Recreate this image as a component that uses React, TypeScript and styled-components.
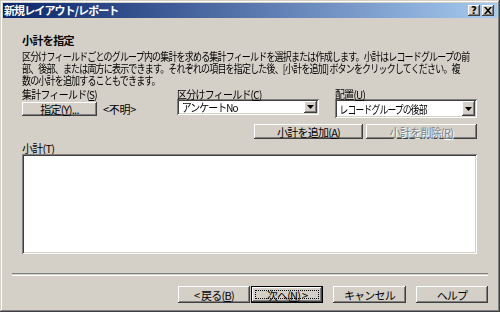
import * as React from 'react';
import styled, { createGlobalStyle, css } from 'styled-components';

const GlobalStyle = createGlobalStyle`
  html, body {
    margin: 0;
    padding: 0;
    background: #d4d0c8;
  }
  body {
    width: 500px;
    height: 312px;
    overflow: hidden;
    font-family: "Noto Sans CJK JP", "Liberation Sans", sans-serif;
    font-size: 11px;
    letter-spacing: -0.75px;
    color: #000;
  }
`;

const raised = css`
  box-shadow: inset -1px -1px #404040, inset 1px 1px #fff, inset -2px -2px #808080,
    inset 2px 2px #d4d0c8;
`;

const sunken = css`
  box-shadow: inset 1px 1px #808080, inset -1px -1px #fff, inset 2px 2px #404040,
    inset -2px -2px #d4d0c8;
`;

// the original UI font has narrow kana, so long runs get squeezed horizontally
const squeeze = (k: number) => css`
  transform: scaleX(${k});
  transform-origin: 0 0;
`;

const Window = styled.div`
  width: 500px;
  height: 312px;
  box-sizing: border-box;
  padding: 3px;
  background: #d4d0c8;
  display: flex;
  flex-direction: column;
  box-shadow: inset -1px -1px #404040, inset 1px 1px #d4d0c8, inset -2px -2px #808080,
    inset 2px 2px #fff;
`;

const TitleBar = styled.div`
  height: 15px;
  display: flex;
  align-items: center;
  justify-content: space-between;
  padding: 0 3px 0 1px;
  background: linear-gradient(to right, #0a246a, #a6caf0);
`;

const Title = styled.span`
  color: #fff;
  font-weight: bold;
  line-height: 15px;
  letter-spacing: -0.9px;
`;

const CaptionButtons = styled.div`
  display: flex;
  gap: 2px;
`;

const CaptionButton = styled.div`
  width: 12px;
  height: 11px;
  background: #d4d0c8;
  ${raised};
  display: flex;
  align-items: center;
  justify-content: center;
  font: bold 10px "DejaVu Sans", sans-serif;
  letter-spacing: 0;
  line-height: 11px;
`;

const Content = styled.div`
  display: flex;
  flex-direction: column;
  padding: 0 20px 0 19px;
`;

const Heading = styled.div`
  margin-top: 16px;
  font-weight: bold;
  line-height: 13px;
  letter-spacing: -0.6px;
`;

const Description = styled.div`
  margin-top: 3px;
  line-height: 12px;
  white-space: nowrap;
  letter-spacing: -1px;
  ${squeeze(0.818)};
`;

const FieldGrid = styled.div`
  margin-top: 4px;
  display: grid;
  grid-template-columns: 155px 158px 142px;
  align-items: start;
`;

const Column = styled.div`
  display: flex;
  flex-direction: column;
`;

const Label = styled.div`
  line-height: 9px;
  height: 9px;
  white-space: nowrap;
  ${squeeze(0.9)};
`;

const SpecifyRow = styled.div`
  display: flex;
  align-items: center;
  gap: 6px;
  margin-top: 2px;
  white-space: nowrap;
`;

const Button = styled.div<{ $w: number; $h?: number; $disabled?: boolean; $default?: boolean }>`
  position: relative;
  box-sizing: border-box;
  width: ${(p) => p.$w}px;
  height: ${(p) => p.$h ?? 15}px;
  display: flex;
  align-items: center;
  justify-content: center;
  background: #d4d0c8;
  ${raised};
  line-height: 12px;
  white-space: nowrap;
  color: ${(p) => (p.$disabled ? '#808080' : '#000')};
  text-shadow: ${(p) => (p.$disabled ? '1px 1px #fff' : 'none')};
  ${(p) =>
    p.$default &&
    css`
      box-shadow: inset 0 0 0 1px #000, inset -2px -2px #404040, inset 2px 2px #fff,
        inset -3px -3px #808080;
      &::after {
        content: '';
        position: absolute;
        inset: 4px;
        border: 1px dotted #000;
      }
    `}
`;

const Unknown = styled.span`
  letter-spacing: -0.3px;
`;

const Combo = styled.div<{ $h: number }>`
  box-sizing: border-box;
  width: 142px;
  height: ${(p) => p.$h}px;
  background: #fff;
  ${sunken};
  display: flex;
  align-items: center;
  padding: 2px;
`;

const ComboText = styled.div<{ $k: number }>`
  flex: 1;
  padding-left: 3px;
  line-height: 12px;
  white-space: nowrap;
  letter-spacing: -1px;
  ${(p) => squeeze(p.$k)};
`;

const DropButton = styled.div`
  width: 13px;
  align-self: stretch;
  background: #d4d0c8;
  ${raised};
  display: flex;
  align-items: center;
  justify-content: center;
`;

const ActionRow = styled.div`
  margin-top: 6px;
  display: flex;
  justify-content: flex-end;
  gap: 3px;
`;

const ListLabel = styled.div`
  margin-top: 3px;
  line-height: 12px;
  height: 12px;
`;

const ListBox = styled.div`
  height: 100px;
  background: #fff;
  ${sunken};
`;

const Separator = styled.div`
  margin: 19px 9px 0;
  height: 1px;
  border-top: 1px solid #808080;
  border-bottom: 1px solid #fff;
`;

const Footer = styled.div`
  margin: 10px 9px 0;
  display: flex;
  justify-content: flex-end;
`;

const FooterGap = styled.div<{ $w: number }>`
  width: ${(p) => p.$w}px;
`;

const Arrow = () => (
  <svg width="7" height="4" viewBox="0 0 7 4">
    <path d="M0 0h7L3.5 4z" fill="#000" />
  </svg>
);

const Close = () => (
  <svg width="8" height="7" viewBox="0 0 8 7">
    <path d="M0 0h2l2 2.3L6 0h2L5 3.5 8 7H6L4 4.7 2 7H0l3-3.5z" fill="#000" />
  </svg>
);

export default function App() {
  return (
    <>
      <GlobalStyle />
      <Window>
        <TitleBar>
          <Title>新規レイアウト/レポート</Title>
          <CaptionButtons>
            <CaptionButton>?</CaptionButton>
            <CaptionButton>
              <Close />
            </CaptionButton>
          </CaptionButtons>
        </TitleBar>
        <Content>
          <Heading>小計を指定</Heading>
          <Description>
            区分けフィールドごとのグループ内の集計を求める集計フィールドを選択または作成します。小計はレコードグループの前
            <br />
            部、後部、または両方に表示できます。それぞれの項目を指定した後、[小計を追加] ボタンをクリックしてください。複
            <br />
            数の小計を追加することもできます。
          </Description>
          <FieldGrid>
            <Column>
              <Label>
                集計フィールド(<u>S</u>)
              </Label>
              <SpecifyRow>
                <Button $w={75} $h={14}>
                  指定(<u>Y</u>)...
                </Button>
                <Unknown>&lt;不明&gt;</Unknown>
              </SpecifyRow>
            </Column>
            <Column>
              <Label>
                区分けフィールド(<u>C</u>)
              </Label>
              <Combo $h={16}>
                <ComboText $k={0.9}>アンケートNo</ComboText>
                <DropButton>
                  <Arrow />
                </DropButton>
              </Combo>
            </Column>
            <Column>
              <Label>
                配置(<u>U</u>)
              </Label>
              <Combo $h={19}>
                <ComboText $k={0.8}>レコードグループの後部</ComboText>
                <DropButton>
                  <Arrow />
                </DropButton>
              </Combo>
            </Column>
          </FieldGrid>
          <ActionRow>
            <Button $w={109}>
              小計を追加(<u>A</u>)
            </Button>
            <Button $w={111} $disabled>
              小計を削除(<u>R</u>)
            </Button>
          </ActionRow>
          <ListLabel>
            小計(<u>T</u>)
          </ListLabel>
          <ListBox />
        </Content>
        <Separator />
        <Footer>
          <Button $w={72} $h={17}>
            &lt; 戻る(<u>B</u>)
          </Button>
          <FooterGap $w={1} />
          <Button $w={72} $h={17} $default>
            次へ(<u>N</u>) &gt;
          </Button>
          <FooterGap $w={10} />
          <Button $w={73} $h={17}>
            キャンセル
          </Button>
          <FooterGap $w={10} />
          <Button $w={72} $h={17}>
            ヘルプ
          </Button>
        </Footer>
      </Window>
    </>
  );
}
